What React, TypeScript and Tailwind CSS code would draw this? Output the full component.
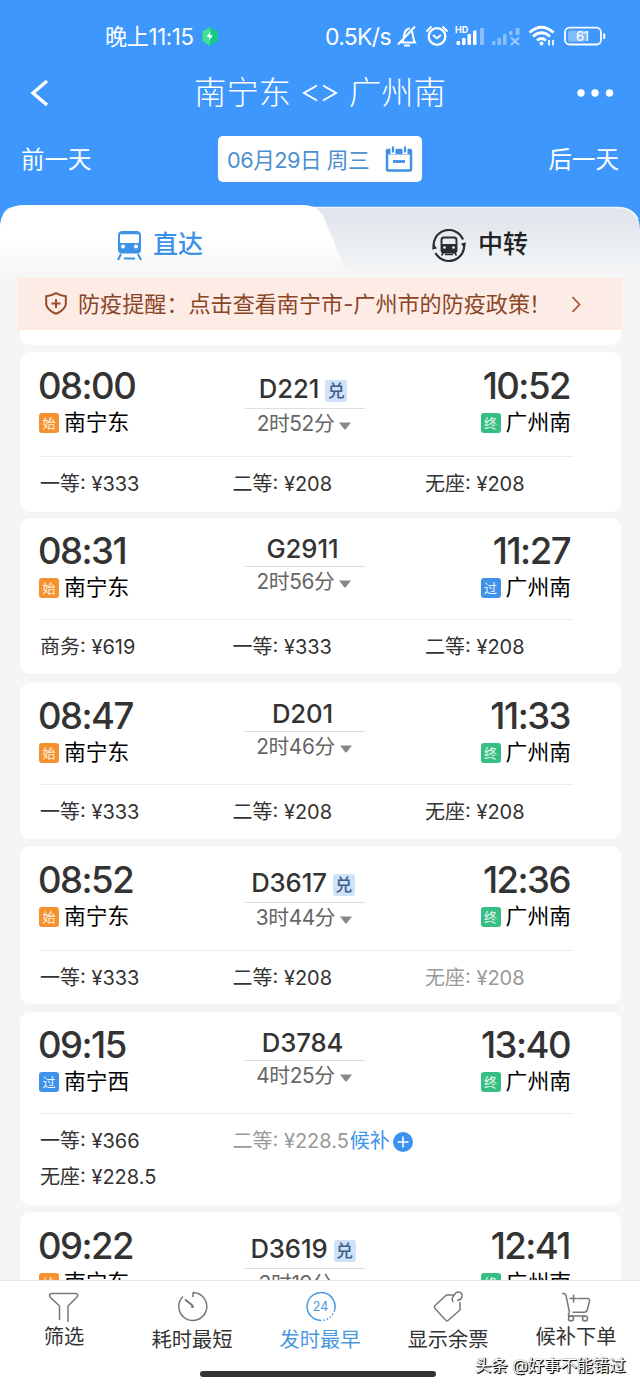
import React from "react";

type Kind = "start" | "pass" | "end";

interface Seat {
  label: string;
  price: string;
  muted?: boolean;
  waitlist?: boolean;
}

interface Train {
  no: string;
  badge?: boolean;
  depart: string;
  arrive: string;
  from: string;
  to: string;
  fromKind: Kind;
  toKind: Kind;
  duration: string;
  seats: Seat[];
  size: string;
}

const trains: Train[] = [
  {
    no: "D221", badge: true, depart: "08:00", arrive: "10:52", from: "南宁东", to: "广州南",
    fromKind: "start", toKind: "end", duration: "2时52分", size: "h-[160px] mb-[6px]",
    seats: [{ label: "一等", price: "333" }, { label: "二等", price: "208" }, { label: "无座", price: "208" }],
  },
  {
    no: "G2911", depart: "08:31", arrive: "11:27", from: "南宁东", to: "广州南",
    fromKind: "start", toKind: "pass", duration: "2时56分", size: "h-[156px] mb-[9px]",
    seats: [{ label: "商务", price: "619" }, { label: "一等", price: "333" }, { label: "二等", price: "208" }],
  },
  {
    no: "D201", depart: "08:47", arrive: "11:33", from: "南宁东", to: "广州南",
    fromKind: "start", toKind: "end", duration: "2时46分", size: "h-[156px] mb-[7px]",
    seats: [{ label: "一等", price: "333" }, { label: "二等", price: "208" }, { label: "无座", price: "208" }],
  },
  {
    no: "D3617", badge: true, depart: "08:52", arrive: "12:36", from: "南宁东", to: "广州南",
    fromKind: "start", toKind: "end", duration: "3时44分", size: "h-[158px] mb-[8px]",
    seats: [{ label: "一等", price: "333" }, { label: "二等", price: "208" }, { label: "无座", price: "208", muted: true }],
  },
  {
    no: "D3784", depart: "09:15", arrive: "13:40", from: "南宁西", to: "广州南",
    fromKind: "pass", toKind: "end", duration: "4时25分", size: "h-[193px] mb-[7px]",
    seats: [{ label: "一等", price: "366" }, { label: "二等", price: "228.5", muted: true, waitlist: true }, { label: "无座", price: "228.5" }],
  },
  {
    no: "D3619", badge: true, depart: "09:22", arrive: "12:41", from: "南宁东", to: "广州南",
    fromKind: "start", toKind: "end", duration: "3时19分", size: "h-[160px]",
    seats: [{ label: "一等", price: "333" }, { label: "二等", price: "208" }, { label: "无座", price: "208" }],
  },
];

const kinds: Record<Kind, { text: string; color: string }> = {
  start: { text: "始", color: "bg-[#f5922f]" },
  pass: { text: "过", color: "bg-[#3f92ea]" },
  end: { text: "终", color: "bg-[#35bf85]" },
};

function Station({ kind, name }: { kind: Kind; name: string }) {
  const k = kinds[kind];
  return (
    <div className="flex h-[30px] items-center gap-[5px]">
      <span className={`mt-[2px] flex size-[20px] items-center justify-center rounded-[3px] text-[13px] leading-none text-white/90 ${k.color}`}>
        {k.text}
      </span>
      <span className="-mt-px text-[21.8px] leading-[30px] text-black">{name}</span>
    </div>
  );
}

function SeatCell({ seat }: { seat: Seat }) {
  return (
    <div className={`flex h-[36px] items-center whitespace-pre text-[20px] ${seat.muted ? "text-[#999]" : "text-[#333]"} ${seat.waitlist ? "col-span-2" : ""}`}>
      <span>{seat.label}: ¥{seat.price}</span>
      {seat.waitlist && (
        <>
          <span className="ml-px text-[#3c92e6]">候补</span>
          <svg className="ml-[3px] mt-[2px] size-[20px]" viewBox="0 0 20 20">
            <circle cx="10" cy="10" r="10" fill="#3b93f0" />
            <path d="M10 4.5v11M4.5 10h11" stroke="#fff" strokeWidth="1.6" />
          </svg>
        </>
      )}
    </div>
  );
}

function TrainCard({ t }: { t: Train }) {
  return (
    <article className={`ml-[20px] w-[601px] shrink-0 rounded-[10px] bg-white pl-[20px] ${t.size}`}>
      <div className={`grid w-[533px] grid-cols-[205px_120px_208px] border-b border-[#ececec] ${t.badge ? "h-[105px] pt-px" : "h-[102px]"}`}>
        <div className="-ml-px pt-[13px]">
          <div className="-ml-px h-[41px] text-[36.5px] font-medium leading-[41px] tracking-[-1.5px] text-[#333]">{t.depart}</div>
          <Station kind={t.fromKind} name={t.from} />
        </div>
        <div className="flex flex-col items-center">
          <div className={`flex w-full items-end justify-center gap-[6px] border-b border-[#dedede] ${t.badge ? "h-[56px] pb-[4px] pr-[4px]" : "h-[49px] pb-[2px] pr-[5px]"}`}>
            <span className="text-[25.7px] font-medium leading-[30px] tracking-[-0.1px] text-[#333]">{t.no}</span>
            {t.badge && (
              <span className="mb-[2px] flex size-[22px] items-center justify-center rounded-[3px] bg-[#cfe2f9] text-[17px] font-medium leading-none text-[#3f5f8c]">兑</span>
            )}
          </div>
          <div className="flex h-[30px] items-center gap-[5px] pr-[2px] text-[20.8px] leading-[30px] tracking-[-0.4px] text-[#666]">
            <span>{t.duration}</span>
            <svg className="mt-[4px] h-[8px] w-[12px]" viewBox="0 0 12 8">
              <path d="M0 .5h12L6.7 7.2q-.7.8-1.4 0z" fill="#888" />
            </svg>
          </div>
        </div>
        <div className="flex flex-col items-end pr-[2px] pt-[13px]">
          <div className="mr-px h-[41px] text-[36.5px] font-medium leading-[41px] tracking-[-1.5px] text-[#333]">{t.arrive}</div>
          <Station kind={t.toKind} name={t.to} />
        </div>
      </div>
      <div className="grid grid-cols-[192.5px_192.5px_192.5px] pt-[9px]">
        {t.seats.map((s) => (
          <SeatCell key={s.label} seat={s} />
        ))}
      </div>
    </article>
  );
}

function StatusBar() {
  return (
    <div className="flex h-[72px] items-center pl-[105px] text-white">
      <div className="w-[91px] whitespace-nowrap pt-[2px] text-[22.2px] tracking-[-0.4px]">晚上11:15</div>
      <svg className="ml-[5px] h-[19px] w-[18px]" viewBox="0 0 18 19">
        <path d="M9 .5l7.5 4v9.500L9 18.500 1.500 14V4.500z" fill="#17c987" stroke="#17c987" strokeLinejoin="round" />
        <path d="M9 .5v18L1.500 14V4.500z" fill="#45dc9f" />
        <path d="M9.600 4L5.800 10h2.700l-.6 4 3.900-5.800H9z" fill="#fff" />
      </svg>
      <div className="ml-[106px] w-[69px] whitespace-nowrap pt-[3px] text-[23px] tracking-[-0.7px]">0.5K/s</div>
      <svg className="ml-[2px] h-[30px] w-[210px]" viewBox="396 22 210 30" fill="none" stroke="#fff" strokeWidth="2">
        <path d="M402 43.500c2.500-3 1.500-7 3-10.500 1.300-2.600 3.200-3.500 5-3.500M411.500 31.500c1.700 2.500 1 8 3.500 12h-14M415 27.500L398 45.500M404 46.500h6" />
        <circle cx="437" cy="37.500" r="8.300" strokeWidth="2.300" />
        <path d="M426.500 32.500l5-5M447.500 32.500l-5-5M433 36l4 3.300 4-3.300" />
        <g fill="#fff" stroke="none">
          <rect x="456.500" y="42" width="3.500" height="4" rx="1" />
          <rect x="462" y="39" width="3.500" height="7" rx="1" />
          <rect x="467.500" y="35" width="3.500" height="11" rx="1" />
          <rect x="473" y="31.500" width="3.500" height="14.500" rx="1" />
          <g opacity=".4">
            <rect x="480" y="29" width="4" height="17" rx="1" />
            <rect x="492" y="42" width="3.500" height="4" rx="1" />
            <rect x="497.500" y="39" width="3.500" height="7" rx="1" />
            <rect x="503" y="35" width="3.500" height="11" rx="1" />
            <rect x="509" y="32" width="3.500" height="4" rx="1" />
            <rect x="515.500" y="29" width="4" height="7" rx="1" />
          </g>
        </g>
        <path d="M511 38.500l8 7.500M519 38.500l-8 7.500" opacity=".5" />
        <path d="M529.500 33.500q12-10.500 24 0M533 37.500q8.500-7.500 17 0M537 41.500q4.500-4 9 0" strokeWidth="2.700" />
        <circle cx="541.500" cy="44.500" r="2" fill="#fff" stroke="none" />
        <path d="M549 41v5.500M553 41v5.500" strokeWidth="1.700" />
        <rect x="565" y="28.700" width="36" height="16.800" rx="4.500" strokeWidth="1.800" />
        <rect x="568" y="31.500" width="18" height="11.300" rx="2" fill="#fff" opacity=".35" stroke="none" />
        <path d="M604.200 34.500v5.500" />
        <text x="455" y="34" fill="#fff" stroke="none" fontSize="9" fontWeight="700">HD</text>
        <text x="576" y="42" fill="#fff" stroke="none" fontSize="13" fontWeight="500" letterSpacing="-.6">61</text>
      </svg>
    </div>
  );
}

function Header() {
  return (
    <header className="h-[205px] shrink-0 bg-[#3d97fc] text-white">
      <StatusBar />
      <div className="flex h-[42px] items-center justify-between pl-[30px] pr-[26px]">
        <svg className="h-[28px] w-[20px]" viewBox="0 0 20 28" fill="none" stroke="#fff" strokeWidth="3.400">
          <path d="M17 2L3 14l14 12" />
        </svg>
        <h1 className="flex items-center gap-[11px] pl-[14px] text-[32.300px] font-light leading-[42px]">
          <span>南宁东</span>
          <svg className="h-[22px] w-[36px]" viewBox="0 0 36 22" fill="none" stroke="#fff" strokeWidth="2">
            <path d="M15 3.500L2 11l13 7.500M21 3.500l13 7.500-13 7.500" />
          </svg>
          <span>广州南</span>
        </h1>
        <svg className="h-[8px] w-[38px]" viewBox="0 0 38 8" fill="#fff">
          <circle cx="5" cy="4" r="3.700" />
          <circle cx="19" cy="4" r="3.700" />
          <circle cx="33.500" cy="4" r="3.700" />
        </svg>
      </div>
      <div className="mt-[22px] flex h-[46px] items-center justify-between px-[21px] text-[23.500px]">
        <span className="pt-[2px]">前一天</span>
        <div className="flex h-[46px] w-[204px] items-center justify-between rounded-[5px] bg-white pl-[9px] pr-[9px] text-[21.700px] tracking-[-0.500px] text-[#4b8fd0]">
          <span className="pt-[3px]">06月29日 周三</span>
          <svg className="h-[28px] w-[28px]" viewBox="0 0 28 28" fill="none" stroke="#3f92e3" strokeWidth="2.500">
            <rect x="2" y="5" width="24" height="20.500" rx="1" />
            <path d="M2 7h24" strokeWidth="5" />
            <path d="M8 1v8M20 1v8" stroke="#fff" strokeWidth="5" />
            <path d="M8 1.500v6M20 1.500v6" strokeWidth="2.200" />
            <path d="M8 16.500h12" strokeWidth="2.800" />
          </svg>
        </div>
        <span className="pt-[2px]">后一天</span>
      </div>
    </header>
  );
}

function Tabs() {
  return (
    <nav className="relative h-[73px] shrink-0 bg-[#f5f5f5]">
      <svg className="absolute inset-0 h-[73px] w-[640px]" viewBox="0 0 640 73">
        <defs>
          <linearGradient id="rest" x1="0" y1="0" x2="0" y2="1">
            <stop offset="0" stopColor="#dfe4eb" />
            <stop offset="0.900" stopColor="#f3f5f6" />
            <stop offset="1" stopColor="#f5f5f5" />
          </linearGradient>
          <linearGradient id="live" x1="0" y1="0" x2="0" y2="1">
            <stop offset="0.500" stopColor="#fff" />
            <stop offset="1" stopColor="#f5f5f5" />
          </linearGradient>
        </defs>
        <rect width="640" height="40" fill="#3d97fc" />
        <path d="M0 2.500H618Q640 2.500 640 26V73H0z" fill="url(#rest)" />
        <path d="M300 2.500H618Q632 2.500 638 14" stroke="#f2f6fb" strokeWidth="1.500" fill="none" />
        <path d="M0 0H20Q0 0 0 24z" fill="#3d97fc" />
        <path d="M0 22Q2 0 24 0H302Q318 0 324 13L349 73H0z" fill="url(#live)" />
      </svg>
      <div className="relative flex h-[73px] pt-[1px]">
        <div className="flex h-[77px] w-[320px] items-center gap-[11px] pl-[117px] text-[25px] font-medium text-[#3c92e6]">
          <svg className="mt-[3px] h-[30px] w-[25px]" viewBox="0 0 25 30">
            <path d="M5.500 0h14Q24 0 24 4.500V18.500q0 4-4 4H5q-4 0-4-4V4.500Q1 0 5.500 0z" fill="#3c92e6" />
            <rect x="3" y="3.200" width="19" height="8.800" rx="1" fill="#fff" />
            <circle cx="6" cy="15.500" r="2" fill="#fff" />
            <circle cx="19" cy="15.500" r="2" fill="#fff" />
            <path d="M4 23L1 29M21 23l3 6M7 27.500h11" stroke="#3c92e6" strokeWidth="2" />
          </svg>
          <span className="pt-px">直达</span>
        </div>
        <div className="flex h-[77px] items-center gap-[12px] pl-[112px] text-[25px] font-medium text-[#222]">
          <svg className="mt-[3px] size-[34px]" viewBox="0 0 34 34" fill="none" stroke="#2b2d31" strokeWidth="2.200">
            <path d="M2 20A15.300 15.300 0 0 1 31 10.500M32 14A15.300 15.300 0 0 1 3.500 24" />
            <path d="M0 20.500l1.800-5.500 3.200 4.500zM34 13.500l-1.800 5.500-3.200-4.500z" fill="#2b2d31" stroke="none" />
            <rect x="9.500" y="8.500" width="15" height="15" rx="2.500" strokeWidth="1.900" />
            <path d="M9.500 15h15v8.500h-15z" fill="#2b2d31" stroke="none" />
            <path d="M11.500 23.500l-2 3M22.500 23.500l2 3M13 25.500h8" strokeWidth="1.600" />
            <circle cx="12.500" cy="18.500" r="1.300" fill="#fff" stroke="none" />
            <circle cx="21.500" cy="18.500" r="1.300" fill="#fff" stroke="none" />
          </svg>
          <span className="pt-px">中转</span>
        </div>
      </div>
    </nav>
  );
}

function Notice() {
  return (
    <div className="ml-[17px] flex h-[52px] w-[606px] shrink-0 items-center bg-[#fdece5] pl-[28px] text-[#8a4528]">
      <svg className="-mt-[2px] h-[23px] w-[22px]" viewBox="0 0 22 23" fill="none" stroke="#9a4a2c" strokeWidth="2">
        <path d="M11 1.200q4.500 2.600 9.800 3v8.300q-1.500 6-9.800 9.300-8.300-3.300-9.800-9.300V4.200q5.300-.4 9.800-3z" />
        <path d="M11 7v9M6.500 11.500h9" />
      </svg>
      <span className="ml-[11px] w-[487px] whitespace-nowrap pt-[2px] text-[22.100px]">
        防疫提醒：点击查看南宁市-广州市的防疫政策<span className="-ml-px">！</span>
      </span>
      <svg className="ml-[6px] h-[17px] w-[10px]" viewBox="0 0 10 17" fill="none" stroke="#a0583a" strokeWidth="1.800">
        <path d="M1.500 1l7 7.500-7 7.500" />
      </svg>
    </div>
  );
}

function FooterItem({ label, active, top, children }: { label: string; active?: boolean; top?: boolean; children: React.ReactNode }) {
  return (
    <div className={`flex w-[128px] flex-col items-center ${active ? "text-[#4a98e0]" : "text-[#333]"}`}>
      <svg className="mt-[10px] h-[32px] w-[32px]" viewBox="0 0 32 32" fill="none" stroke={active ? "#4a98e0" : "#777"} strokeWidth="1.500">
        {children}
      </svg>
      <span className={`whitespace-nowrap text-[20.300px] leading-[26px] ${top ? "mt-px" : "mt-[4px]"}`}>{label}</span>
    </div>
  );
}

function Footer() {
  return (
    <footer className="relative h-[107px] shrink-0 border-t border-[#e6e6e6] bg-white">
      <div className="flex">
        <FooterItem label="筛选" top>
          <path d="M11.500 29V15L2 6Q.5 3 3.500 2.500h24q3.500.5 1.500 3.500L20 15v16" />
        </FooterItem>
        <FooterItem label="耗时最短">
          <path d="M17 1.500a14 14 0 1 1-10 4M17 1.500v4.500" />
          <path d="M9 8.500l7.500 6" strokeWidth="2" />
          <circle cx="16.500" cy="15.500" r="1.500" fill="#777" stroke="none" />
        </FooterItem>
        <FooterItem label="发时最早" active>
          <path d="M17 29.500a14 14 0 1 1 13.500-10" />
          <path d="M30.500 19.500a14 14 0 0 1-13.500 10" strokeDasharray="1.500 2" />
          <text x="16.500" y="20" textAnchor="middle" fontSize="12.500" fill="#4a98e0" stroke="none">24</text>
        </FooterItem>
        <FooterItem label="显示余票">
          <path d="M22 4h-7.500L3 14.500q-1.200 1.500 0 3l11 12q1 .8 2 0L28 19v-8" />
          <path d="M21 11q-2-4 1-6.500Q23.500.8 27 1q3.500.8 3 4.500-.6 3.500-5 4" />
        </FooterItem>
        <FooterItem label="候补下单" top>
          <path d="M2 2.500q3.500-.5 4 2L9.500 21.500M18 7.500h9.500q2.500 0 2 2.500l-2 8q-.7 3.200-3 3.200H12.500" />
          <path d="M13.500 3.500v8M9.500 7.500h8" />
          <circle cx="11" cy="27.500" r="2.500" />
          <circle cx="25" cy="27.500" r="2.500" />
          <path d="M9.500 21.500q-2 2-.5 3.500h16" />
        </FooterItem>
      </div>
      <div className="absolute left-[200px] top-[90px] h-[6px] w-[236px] rounded-full bg-[#333]" />
      <div className="absolute left-[475px] top-[73px] whitespace-nowrap text-[16.300px] leading-[22px] text-white [text-shadow:1px_1px_0_#111,1px_1px_1px_#111,0_0_1px_#555]">头条 @好事不能错过</div>
    </footer>
  );
}

export default function App() {
  return (
    <div className="flex h-[1387px] w-[640px] flex-col overflow-hidden bg-[#f5f5f5] font-['Inter','Noto_Sans_CJK_SC',sans-serif]">
      <Header />
      <Tabs />
      <Notice />
      <main className="flex min-h-0 flex-1 flex-col overflow-hidden">
        <div className="mb-[7px] ml-[20px] h-[15px] w-[601px] shrink-0 rounded-b-[10px] bg-white" />
        {trains.map((t) => (
          <TrainCard key={t.no} t={t} />
        ))}
      </main>
      <Footer />
    </div>
  );
}
